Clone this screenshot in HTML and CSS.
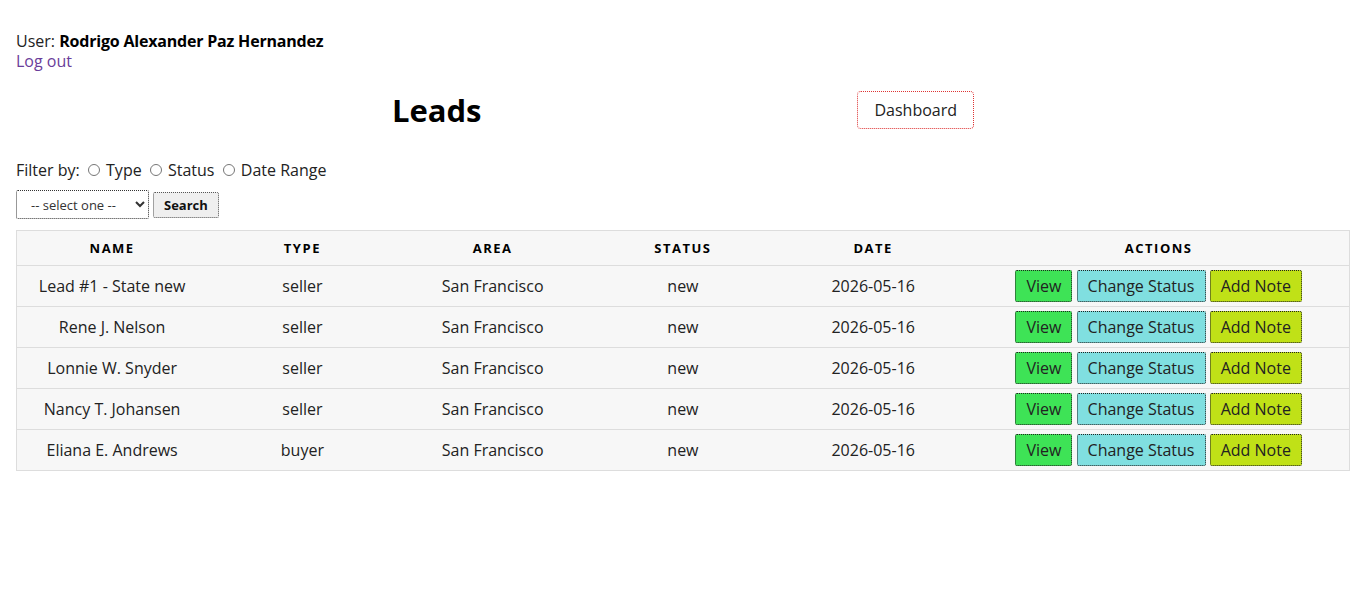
FILE: index.html
```html
<!DOCTYPE html>
<html lang="en">

<head>
    <meta charset="UTF-8">
    <meta name="viewport" content="width=device-width, initial-scale=1.0">
    <title>Leads</title>
    <link rel="stylesheet" href="styles.css">
</head>

<body>
    <div class="user-info">
        <p>User: <b>Rodrigo Alexander Paz Hernandez</b></p>
        <a href="#" class="logout">Log out</a>
    </div>

    <div class="header">
        <h1>Leads</h1>
        <a href="#" class="dash-btn">Dashboard</a>
    </div>

    <form class="filters">
        <p class="filter-by">
            Filter by:
            <label><input type="radio" name="filter"> Type</label>
            <label><input type="radio" name="filter"> Status</label>
            <label><input type="radio" name="filter"> Date Range</label>
        </p>
        <p class="search-row">
            <select>
                <option>-- select one --</option>
            </select>
            <button type="button" class="search-btn">Search</button>
        </p>
    </form>

    <table class="leads">
        <thead>
            <tr>
                <th>Name</th>
                <th>Type</th>
                <th>Area</th>
                <th>Status</th>
                <th>Date</th>
                <th class="actions">Actions</th>
            </tr>
        </thead>
        <tbody>
            <tr>
                <td>Lead #1 - State new</td>
                <td>seller</td>
                <td>San Francisco</td>
                <td>new</td>
                <td>2026-05-16</td>
                <td><button class="btn view">View</button> <button class="btn change">Change Status</button> <button class="btn note">Add Note</button></td>
            </tr>
            <tr>
                <td>Rene J. Nelson</td>
                <td>seller</td>
                <td>San Francisco</td>
                <td>new</td>
                <td>2026-05-16</td>
                <td><button class="btn view">View</button> <button class="btn change">Change Status</button> <button class="btn note">Add Note</button></td>
            </tr>
            <tr>
                <td>Lonnie W. Snyder</td>
                <td>seller</td>
                <td>San Francisco</td>
                <td>new</td>
                <td>2026-05-16</td>
                <td><button class="btn view">View</button> <button class="btn change">Change Status</button> <button class="btn note">Add Note</button></td>
            </tr>
            <tr>
                <td>Nancy T. Johansen</td>
                <td>seller</td>
                <td>San Francisco</td>
                <td>new</td>
                <td>2026-05-16</td>
                <td><button class="btn view">View</button> <button class="btn change">Change Status</button> <button class="btn note">Add Note</button></td>
            </tr>
            <tr>
                <td>Eliana E. Andrews</td>
                <td>buyer</td>
                <td>San Francisco</td>
                <td>new</td>
                <td>2026-05-16</td>
                <td><button class="btn view">View</button> <button class="btn change">Change Status</button> <button class="btn note">Add Note</button></td>
            </tr>
        </tbody>
    </table>
</body>

</html>
```

FILE: styles.css
```css
body {
    margin: 0;
    padding: 31px 20px 0 16px;
    font-family: "Open Sans", "Noto Sans", sans-serif;
    font-size: 16px;
    color: #222;
}

.user-info p {
    margin: 0;
    line-height: 20px;
}

.user-info b {
    color: #000;
    letter-spacing: -0.2px;
}

.logout {
    display: block;
    line-height: 20px;
    color: #6a3d9a;
    text-decoration: none;
}

.header {
    display: flex;
    justify-content: space-evenly;
    align-items: center;
    height: 44px;
    margin-top: 17px;
}

.header h1 {
    margin: 0;
    font-size: 31px;
    color: #000;
}

.dash-btn {
    padding: 8px 16px;
    line-height: 20px;
    border: 1px dotted #d33;
    border-radius: 4px;
    color: #222;
    text-decoration: none;
}

.filters p {
    margin: 0;
}

.filter-by {
    margin-top: 28px !important;
    line-height: 20px;
}

.filter-by input {
    margin: 0 2px 0 4px;
    width: 12px;
    height: 12px;
    vertical-align: 0;
}

.search-row {
    display: flex;
    align-items: center;
    gap: 4px;
    margin-top: 10px !important;
}

.search-row select {
    width: 133px;
    height: 29px;
    border: 1px dotted #333;
    border-radius: 2px;
    background: #fff;
    font-family: inherit;
    font-size: 13px;
    color: #333;
    padding-left: 10px;
}

.search-btn {
    height: 26px;
    padding: 0 10px;
    border: 1px dotted #555;
    border-radius: 2px;
    background: #efefef;
    font-family: inherit;
    font-weight: bold;
    font-size: 13px;
    color: #111;
}

.leads {
    width: 100%;
    margin-top: 11px;
    border-collapse: collapse;
    background: #f7f7f7;
    border: 1px solid #ddd;
    table-layout: fixed;
}

.leads th {
    width: 14.28%;
    height: 34px;
    padding: 0;
    font-size: 13px;
    letter-spacing: 1.5px;
    text-transform: uppercase;
    color: #000;
    border-bottom: 1px solid #ddd;
}

.leads th.actions {
    width: 28.57%;
}

.leads td {
    height: 40px;
    padding: 0;
    text-align: center;
    border-bottom: 1px solid #ddd;
}

.btn {
    height: 32px;
    padding: 0 10px;
    border: 1px dotted #222;
    border-radius: 2px;
    font-family: inherit;
    font-size: 16px;
    color: #222;
    vertical-align: middle;
}

.view {
    background: #3ee356;
}

.change {
    background: #80dfe0;
}

.note {
    background: #c0e117;
}
```
